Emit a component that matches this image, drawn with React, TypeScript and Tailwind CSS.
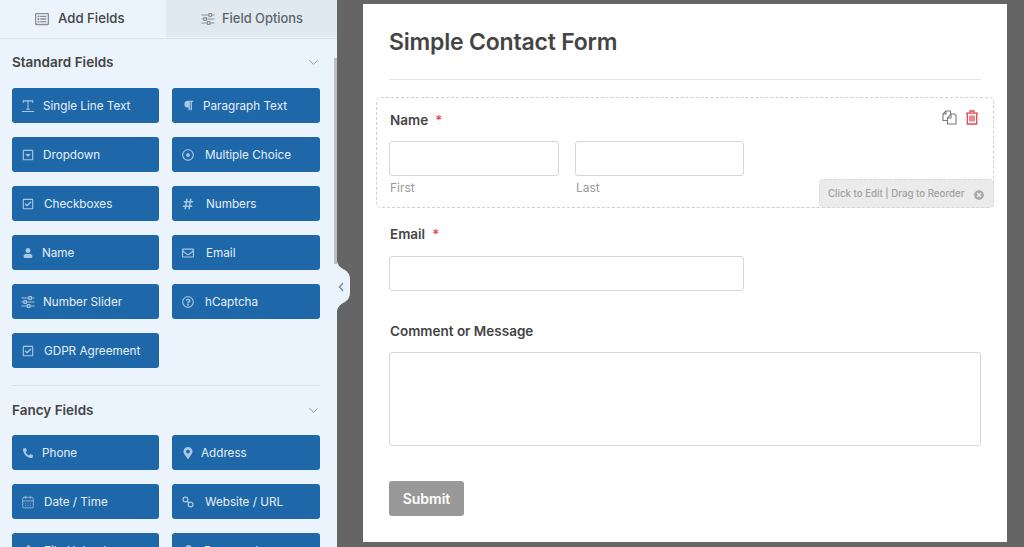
import { CalendarDays, ChevronDown } from 'lucide-react'
import { FaHashtag, FaMapMarkerAlt, FaParagraph, FaPhone, FaRegCaretSquareDown, FaRegCheckSquare, FaRegDotCircle, FaRegEnvelope, FaRegListAlt, FaRegQuestionCircle, FaTimesCircle, FaUser, FaUpload, FaLock } from 'react-icons/fa'
import type { ReactNode } from 'react'

function SingleLineIcon() {
  return (
    <svg width="15" height="14" viewBox="0 0 15 14" fill="none" stroke="currentColor" strokeWidth="1.1">
      <path d="M2.5 3.5V1.5H12.5V3.5M7.5 1.5V10.5M5.5 10.5H9.5M1 12.8H14" />
    </svg>
  )
}

function SliderIcon({ fill = '#1e68aa' }: { fill?: string }) {
  return (
    <svg width="14" height="14" viewBox="0 0 14 14" fill="none" stroke="currentColor" strokeWidth="1.1">
      <path d="M0.5 3H13.5M0.5 7H13.5M0.5 11H13.5" />
      <rect x="8" y="1.6" width="2.4" height="2.8" fill={fill} />
      <rect x="3" y="5.6" width="2.4" height="2.8" fill={fill} />
      <rect x="6.5" y="9.6" width="2.4" height="2.8" fill={fill} />
    </svg>
  )
}

function LinkIcon() {
  return (
    <svg width="12" height="12" viewBox="0 0 14 14" fill="none" stroke="currentColor" strokeWidth="1.5">
      <circle cx="4" cy="4" r="2.8" />
      <circle cx="10" cy="10" r="2.8" />
      <path d="M5.8 5.8L8.2 8.2" />
    </svg>
  )
}

function CopyIcon() {
  return (
    <svg width="15" height="15" viewBox="0 0 15 15" fill="none" stroke="#777" strokeWidth="1.1">
      <path d="M6 1H4L1 4V10.5H5.5" />
      <path d="M4 1V4H1" />
      <path d="M6 1H8.5V4" />
      <path d="M9 4H12.5L14 5.5V14H5.5V8Z" fill="#fff" />
      <path d="M9 4V8H5.5" />
    </svg>
  )
}

function TrashIcon() {
  return (
    <svg width="14" height="15" viewBox="0 0 14 15" fill="none" stroke="#e5484d" strokeWidth="1.3">
      <path d="M1 3.2H13M5 3V1H9V3" />
      <path d="M2.3 3.2V14H11.7V3.2" />
      <path d="M5 5.5V11.5M7 5.5V11.5M9 5.5V11.5" />
    </svg>
  )
}

type Field = { label: string; icon: ReactNode; gap: string }

const standard: Field[] = [
  { label: 'Single Line Text', icon: <SingleLineIcon />, gap: 'gap-[8px]' },
  { label: 'Paragraph Text', icon: <FaParagraph size={11} />, gap: 'gap-[8px]' },
  { label: 'Dropdown', icon: <FaRegCaretSquareDown size={12} />, gap: 'gap-[8px]' },
  { label: 'Multiple Choice', icon: <FaRegDotCircle size={12} />, gap: 'gap-[10px]' },
  { label: 'Checkboxes', icon: <FaRegCheckSquare size={12} />, gap: 'gap-[9px]' },
  { label: 'Numbers', icon: <FaHashtag size={12} />, gap: 'gap-[11px]' },
  { label: 'Name', icon: <FaUser size={10} />, gap: 'gap-[7px]' },
  { label: 'Email', icon: <FaRegEnvelope size={12} />, gap: 'gap-[11px]' },
  { label: 'Number Slider', icon: <SliderIcon />, gap: 'gap-[8px]' },
  { label: 'hCaptcha', icon: <FaRegQuestionCircle size={12} />, gap: 'gap-[10px]' },
  { label: 'GDPR Agreement', icon: <FaRegCheckSquare size={12} />, gap: 'gap-[9px]' },
]

const fancy: Field[] = [
  { label: 'Phone', icon: <FaPhone size={10} className="-scale-x-100" />, gap: 'gap-[7px]' },
  { label: 'Address', icon: <FaMapMarkerAlt size={12} />, gap: 'gap-[6px]' },
  { label: 'Date / Time', icon: <CalendarDays size={14} strokeWidth={1.3} />, gap: 'gap-[9px]' },
  { label: 'Website / URL', icon: <LinkIcon />, gap: 'gap-[10px]' },
  { label: 'File Upload', icon: <FaUpload size={11} />, gap: 'gap-[9px]' },
  { label: 'Password', icon: <FaLock size={11} />, gap: 'gap-[9px]' },
]

function FieldButton({ label, icon, gap }: Field) {
  return (
    <div className={`flex h-[35px] w-full shrink-0 items-center rounded-[3px] bg-[#1e68aa] pl-[9px] text-[11.7px] font-normal text-[#e6eff8] ${gap}`}>
      <span className="flex w-[14px] justify-center text-[#a9c6e2]">{icon}</span>
      <span className="pt-[2px]">{label}</span>
    </div>
  )
}

function SectionHead({ title }: { title: string }) {
  return (
    <div className="flex items-center justify-between text-[#444]">
      <h2 className="text-[13.5px] leading-[20px] font-semibold">{title}</h2>
      <ChevronDown size={15} strokeWidth={1.5} className="-mr-px text-[#8a96a3]" />
    </div>
  )
}

function Required() {
  return <span className="ml-[7px] text-[13px] font-semibold text-[#e5484d]">*</span>
}

function Input({ className }: { className: string }) {
  return <div className={`rounded-[3px] border border-[#d6d6d6] bg-white ${className}`} />
}

export default function App() {
  return (
    <main className="relative flex h-[547px] w-[1024px] overflow-hidden bg-[#656565] font-['Inter',sans-serif]">
      <aside className="relative h-full w-[337px] shrink-0 overflow-hidden bg-[#ebf3fc]">
        <div className="flex h-[39px] border-b border-[#d8e1ea] pb-px text-[13.2px] font-medium">
          <div className="flex w-[166px] items-center gap-[9px] pl-[35px] text-[#444]">
            <FaRegListAlt size={14} className="text-[#8b8f94]" />
            Add Fields
          </div>
          <div className="flex flex-1 items-center gap-[7px] bg-[#e0e8f0] pl-[35px] text-[12.9px] text-[#5f6468]">
            <span className="text-[#8b8f94]"><SliderIcon fill="#e0e8f0" /></span>
            Field Options
          </div>
        </div>
        <div className="pt-[13px] pr-[17px] pl-3">
          <SectionHead title="Standard Fields" />
          <div className="mt-[16px] grid grid-cols-[147px_148px] gap-x-[13px] gap-y-[14px]">
            {standard.map((f) => <FieldButton key={f.label} {...f} />)}
          </div>
          <div className="mt-[17px] h-px bg-[#d8e1ea]" />
          <div className="mt-[14px]">
            <SectionHead title="Fancy Fields" />
          </div>
          <div className="mt-[15px] grid grid-cols-[147px_148px] gap-x-[13px] gap-y-[14px]">
            {fancy.map((f) => <FieldButton key={f.label} {...f} />)}
          </div>
        </div>
        <div className="absolute top-[58px] right-0 h-[206px] w-[3px] bg-[#bcc0c4]" />
      </aside>

      <svg className="absolute top-[261px] left-[337px]" width="14" height="50" viewBox="0 0 14 50">
        <path d="M0 0C1 5 4 7 8 9C11 11 13 14 13 18V32C13 36 11 39 8 41C4 43 1 45 0 50Z" fill="#ebf3fc" />
        <path d="M6 22L2.5 26L6 30" fill="none" stroke="#7f8a96" strokeWidth="1.4" />
      </svg>

      <section className="mt-1 mb-[5px] ml-[26px] w-[644px] bg-white px-[26px] text-[#444]">
        <h1 className="mt-[23px] text-[23px] leading-[30px] font-semibold tracking-[-0.2px]">Simple Contact Form</h1>
        <div className="mt-[22px] h-px w-[592px] bg-[#e4e4e4]" />

        <div className="relative -mx-[13px] mt-[17px] h-[111px] w-[618px] rounded-[5px] border border-dashed border-[#cfcfcf] px-[12px] pt-[13px]">
          <div className="pl-px text-[13.5px] leading-[18px] font-semibold">Name<Required /></div>
          <div className="mt-[12px] flex gap-[16px]">
            <div className="w-[170px]">
              <Input className="h-[35px] w-[170px]" />
              <div className="mt-[4px] pl-px text-[12px] leading-[16px] text-[#9a9a9a]">First</div>
            </div>
            <div className="w-[169px]">
              <Input className="h-[35px] w-[169px]" />
              <div className="mt-[4px] pl-px text-[12px] leading-[16px] text-[#9a9a9a]">Last</div>
            </div>
          </div>
          <div className="absolute top-[12px] right-[14px] flex items-center gap-[8px]">
            <CopyIcon />
            <TrashIcon />
          </div>
          <div className="absolute -right-px -bottom-px flex h-[29px] w-[175px] items-center justify-between rounded-[5px] border border-dashed border-[#d6d6d6] bg-[#ebebeb] pt-[2px] pr-[9px] pl-[8px] text-[9.7px] font-medium text-[#a0a0a0]">
            <span>Click to Edit | Drag to Reorder</span>
            <FaTimesCircle size={10} className="text-[#a8a8a8]" />
          </div>
        </div>

        <div className="mt-[17px] pl-px text-[13.5px] leading-[18px] font-semibold">Email<Required /></div>
        <Input className="mt-[13px] h-[35px] w-[355px]" />

        <div className="mt-[31px] pl-px text-[13.5px] leading-[18px] font-semibold">Comment or Message</div>
        <Input className="mt-[12px] h-[94px] w-[592px]" />

        <div className="mt-[35px] flex h-[35px] w-[75px] items-center justify-center rounded-[3px] bg-[#999] text-[14px] font-semibold text-white">Submit</div>
      </section>
    </main>
  )
}
